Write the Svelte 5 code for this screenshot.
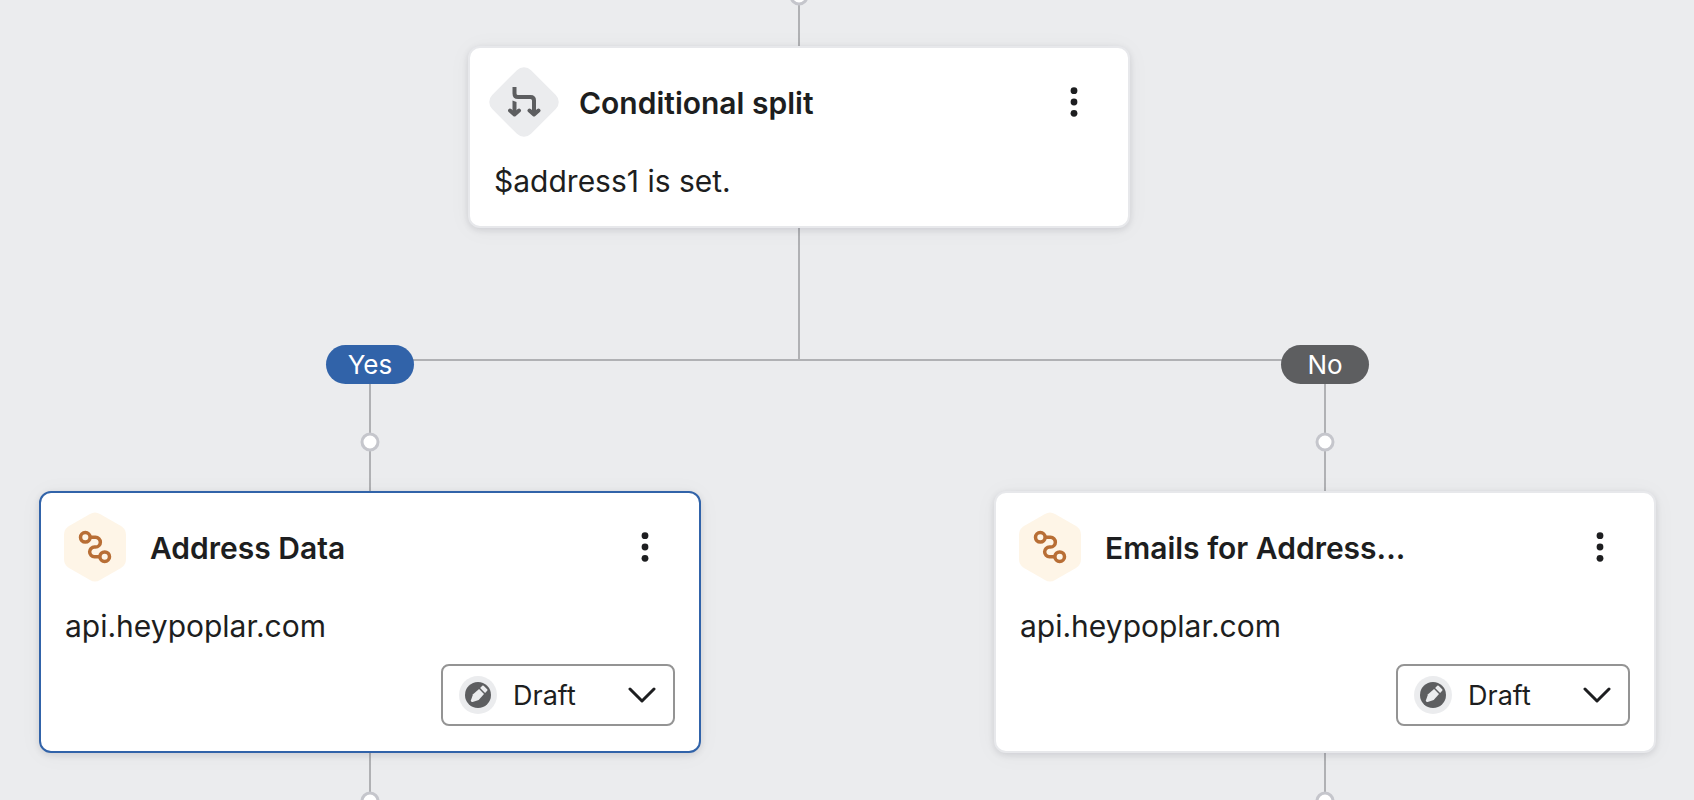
<script>
  const nodes = [
    { id: 'split', x: -48, y: 46, kind: 'split', title: 'Conditional split', detail: '$address1 is set.' },
    { id: 'address', x: -477, y: 491, kind: 'webhook', title: 'Address Data', detail: 'api.heypoplar.com', status: 'Draft', selected: true },
    { id: 'emails', x: 478, y: 491, kind: 'webhook', title: 'Emails for Address...', detail: 'api.heypoplar.com', status: 'Draft' }
  ];

  const branches = [
    { label: 'Yes', x: -477, y: 345 },
    { label: 'No', x: 478, y: 345 }
  ];

  const lines = [
    'M-48 0V46',
    'M-48 228V360',
    'M-477 360H478',
    'M-477 360V491',
    'M478 360V491',
    'M-477 751V800',
    'M478 751V800'
  ];

  const ports = [
    { x: -48, y: -4 },
    { x: -477, y: 442 },
    { x: 478, y: 442 },
    { x: -477, y: 801 },
    { x: 478, y: 801 }
  ];
</script>

<main class="canvas">
  <svg class="wires" width="1" height="1" aria-hidden="true">
    {#each lines as d}
      <path {d} />
    {/each}
    {#each ports as port}
      <circle cx={port.x} cy={port.y} r="8" />
    {/each}
  </svg>

  {#each branches as branch}
    <span class="branch" class:yes={branch.label === 'Yes'} style="--x: {branch.x}px; --y: {branch.y}px">{branch.label}</span>
  {/each}

  {#each nodes as node (node.id)}
    <article class="card" class:selected={node.selected} style="--x: {node.x}px; --y: {node.y}px">
      <header>
        {#if node.kind === 'split'}
          <svg class="badge" viewBox="0 0 70 70" aria-hidden="true">
            <rect x="7.500" y="7.500" width="55" height="55" rx="10" transform="rotate(45 35 35)" fill="#ebecee" />
            <g fill="none" stroke="#5d5e60" stroke-width="4" stroke-linejoin="round">
              <path d="M25.500 20V26.500Q25.500 30 29 30H41.500Q45 30 45 33.500V47.500" />
              <path d="M23.500 33.500L27.500 35V47.500H23.500Z" fill="#5d5e60" stroke="none" />
              <path d="M21 43.500L25.500 47.500L30 43.500M40.500 43.500L45 47.500L49.500 43.500" stroke-linecap="round" />
            </g>
          </svg>
        {:else}
          <svg class="badge" viewBox="0 0 70 70" aria-hidden="true">
            <path d="M30 2Q35-1 40 2L61 14Q66 17 66 23V47Q66 53 61 56L40 68Q35 71 30 68L9 56Q4 53 4 47V23Q4 17 9 14Z" fill="#fef5e7" />
            <g fill="none" stroke="#b86e35" stroke-width="3.500">
              <circle cx="25.300" cy="25.300" r="4.800" />
              <circle cx="44.700" cy="44.700" r="4.800" />
              <path d="M30 25.300H35.500A4.850 4.850 0 0 1 35.500 35H34.500A4.850 4.850 0 0 0 34.500 44.700H40" />
            </g>
          </svg>
        {/if}
        <h2>{node.title}</h2>
        <button class="more" type="button" aria-label="More options">
          <svg viewBox="0 0 32 32" aria-hidden="true">
            <circle cx="16" cy="4.700" r="3.400" />
            <circle cx="16" cy="16" r="3.400" />
            <circle cx="16" cy="27.300" r="3.400" />
          </svg>
        </button>
      </header>
      <p>{node.detail}</p>
      {#if node.status}
        <div class="status">
          <select aria-label="Status of {node.title}">
            <option>{node.status}</option>
          </select>
          <svg class="pencil" viewBox="0 0 38 38" aria-hidden="true">
            <circle cx="19" cy="19" r="19" fill="#ebecee" />
            <circle cx="19" cy="19" r="13" fill="#5d5e60" />
            <g transform="translate(19 19) rotate(45)" fill="#ebecee">
              <path d="M-3.500-9.500Q-3.500-10.500-2.500-10.500H2.500Q3.500-10.500 3.500-9.500V-6.500H-3.500Z" />
              <path d="M-3.500-5H3.500L4 3L1.200 8.800Q0 10.500-1.200 8.800L-4 3Z" />
            </g>
          </svg>
          <svg class="chevron" viewBox="0 0 28 18" aria-hidden="true">
            <path d="M2 3L14 15L26 3" />
          </svg>
        </div>
      {/if}
    </article>
  {/each}
</main>

<style>
  :global(body) {
    margin: 0;
    background: #ebecee;
  }

  .canvas {
    position: relative;
    min-height: 100vh;
    overflow: hidden;
    background: #ebecee;
    color: #1d1e20;
    font-family: Inter, "Liberation Sans", sans-serif;
  }

  .wires {
    position: absolute;
    top: 0;
    left: 50%;
    overflow: visible;
  }

  .wires path {
    fill: none;
    stroke: #b0b1b4;
    stroke-width: 2;
  }

  .wires circle {
    fill: #fff;
    stroke: #c5c6cc;
    stroke-width: 3;
  }

  .branch {
    position: absolute;
    top: var(--y);
    left: calc(50% + var(--x) - 44px);
    box-sizing: border-box;
    width: 88px;
    border-radius: 20px;
    background: #5d5e60;
    color: #fff;
    font-size: 26px;
    line-height: 39px;
    text-align: center;
  }

  .branch.yes {
    background: #3163a9;
  }

  .card {
    position: absolute;
    top: var(--y);
    left: calc(50% + var(--x) - 331px);
    box-sizing: border-box;
    width: 662px;
    padding: 19px 24px 25px;
    border: 2px solid #e7e8eb;
    border-radius: 12px;
    background: #fff;
    box-shadow: 0 2px 6px rgba(29, 30, 50, 0.12), 0 2px 24px rgba(29, 30, 50, 0.04);
  }

  .card.selected {
    border-color: #3163a9;
  }

  header {
    display: flex;
    align-items: center;
    gap: 20px;
    margin: 0 14px 24px -5px;
  }

  .badge {
    flex: none;
    width: 70px;
    height: 70px;
  }

  h2 {
    flex: 1;
    margin: 0;
    padding-top: 2px;
    font-size: 30px;
    font-weight: 600;
    line-height: 40px;
    white-space: nowrap;
  }

  .more {
    display: grid;
    padding: 0;
    border: 0;
    background: none;
    cursor: pointer;
  }

  .more svg {
    width: 32px;
    height: 32px;
    fill: #1d1e20;
  }

  p {
    margin: 0;
    font-size: 30px;
    line-height: 40px;
  }

  .status {
    display: grid;
    align-items: center;
    width: 234px;
    margin: 18px 0 0 auto;
  }

  .status > * {
    grid-area: 1 / 1;
  }

  select {
    box-sizing: border-box;
    width: 100%;
    height: 62px;
    padding: 0 56px 0 70px;
    border: 2px solid #949494;
    border-radius: 8px;
    background: #fff;
    color: inherit;
    font: inherit;
    font-size: 27px;
    appearance: none;
  }

  .pencil,
  .chevron {
    pointer-events: none;
  }

  .pencil {
    width: 38px;
    height: 38px;
    margin-left: 18px;
  }

  .chevron {
    justify-self: end;
    width: 28px;
    height: 18px;
    margin-right: 19px;
    fill: none;
    stroke: #1d1e20;
    stroke-width: 3;
    stroke-linecap: round;
    stroke-linejoin: round;
  }
</style>
